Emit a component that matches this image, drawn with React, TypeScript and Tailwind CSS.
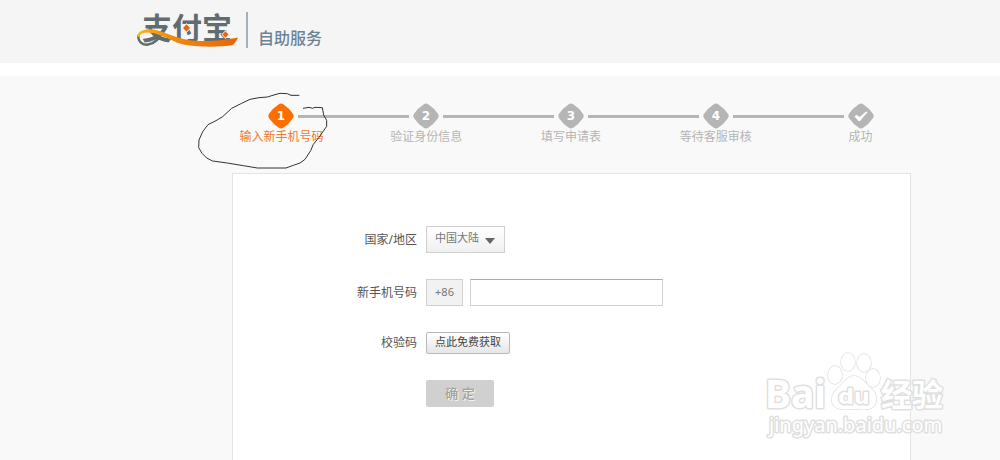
import React, { useState } from 'react';

type Step = {
  mark: string;
  label: string;
};

const STEPS: Step[] = [
  { mark: '1', label: '输入新手机号码' },
  { mark: '2', label: '验证身份信息' },
  { mark: '3', label: '填写申请表' },
  { mark: '4', label: '等待客服审核' },
  { mark: '', label: '成功' },
];

function Logo() {
  return (
    <svg viewBox="0 0 106 42" className="h-[42px] w-[106px] overflow-visible" role="img" aria-label="支付宝">
      <defs>
        <linearGradient id="swoosh" x1="0" x2="1" y1="0" y2="0">
          <stop offset="0" stopColor="#fbb216" />
          <stop offset="0.35" stopColor="#f08a0c" />
          <stop offset="1" stopColor="#e8650a" />
        </linearGradient>
      </defs>
      <text
        x="6"
        y="31"
        fontSize="30"
        fontWeight="700"
        fill="#5f6c70"
        fontFamily="'Noto Sans CJK SC', sans-serif"
      >
        支付宝
      </text>
      {/* 左侧回环 */}
      <path
        d="M2.500 27 C1.500 33 6 37.500 12 36.500 C19 35.500 24 30 27 22"
        fill="none"
        stroke="#5f6c70"
        strokeWidth="2.500"
      />
      <path
        d="M1.200 28.500 C2 22 12 20 20 22 C34 26 44 32 62 33 C78 33.500 91 31.500 102 29.500 C101 32 99 35 97 37 C86 39 66 39.500 50 37 C38 35 29 28 18 25.300 C10 23.500 4.500 24.500 3 29 Z"
        fill="url(#swoosh)"
      />
      {/* 底色先盖住字上的点，再画橙色菱形 */}
      <path d="M46 20 L50.500 15 L55 20 L50.500 25 Z" fill="#f5f5f5" />
      <path d="M47 20 L50.500 16.200 L54 20 L50.500 23.800 Z" fill="#e8650a" />
      <path d="M85.500 26.500 L89.500 22 L93.500 26.500 L89.500 31 Z" fill="#f5f5f5" />
      <path d="M86.500 26.500 L89.500 23.300 L92.500 26.500 L89.500 29.700 Z" fill="#e8650a" />
    </svg>
  );
}

function StepMark({ mark, active }: { mark: string; active: boolean }) {
  return (
    <svg viewBox="0 0 26 26" className="mx-1 size-[26px] shrink-0" aria-hidden="true">
      <path
        d="M10.500 1.500 Q13 -0.500 15.500 1.500 Q21 5 24.700 10.500 Q26.700 13 24.700 15.500 Q21 21 15.500 24.500 Q13 26.500 10.500 24.500 Q5 21 1.300 15.500 Q-0.700 13 1.300 10.500 Q5 5 10.500 1.500 Z"
        fill={active ? '#ff6c00' : '#b5b5b5'}
      />
      {mark ? (
        <text
          x="13"
          y="16.500"
          textAnchor="middle"
          fontSize="12"
          fontWeight="700"
          fill="#fff"
          fontFamily="'DejaVu Sans', sans-serif"
        >
          {mark}
        </text>
      ) : (
        <path d="M6.500 13.500 L8.500 11.800 L11.500 14 L18.500 8.300 L19.500 9.300 L12 18 L10.500 18 Z" fill="#fff" />
      )}
    </svg>
  );
}

function Steps() {
  return (
    <ol className="relative flex pl-[209px] pr-[67px] pt-[27px]">
      {STEPS.map((step, i) => (
        <li
          key={step.label}
          className={`flex flex-1 flex-col items-center text-xs leading-4 ${i === 0 ? 'text-[#f37a2c]' : 'text-[#b5b5b5]'}`}
        >
          <div className="flex w-full items-center">
            <span className={`h-[3px] flex-1 ${i === 0 ? '' : 'bg-[#b5b5b5]'}`} />
            <StepMark mark={step.mark} active={i === 0} />
            <span className={`h-[3px] flex-1 ${i === STEPS.length - 1 ? '' : 'bg-[#b5b5b5]'}`} />
          </div>
          <span>{step.label}</span>
        </li>
      ))}
      {/* 手绘圈注 */}
      <svg
        viewBox="0 0 840 285"
        className="pointer-events-none absolute left-[190px] top-[9px] h-[95px] w-[280px]"
        aria-hidden="true"
      >
        <path
          d="M328 31 L303 31 L292 26 L270 25 L255 29 L232 36 L207 38 L180 43 L155 55 L125 70 L98 95 L78 107 L54 119 L38 140 L27 165 L26 188 L36 205 L50 219 L68 228 L112 234 L160 242 L202 249 L288 249 L310 241 L330 234 L345 223 L362 197 L370 178 L387 157 L410 124 L410 106 L401 90 L397 68 L375 67 L368 70 L357 67 L339 70"
          fill="none"
          stroke="#333"
          strokeWidth="3"
        />
      </svg>
    </ol>
  );
}

function Watermark() {
  return (
    <svg
      viewBox="0 0 196 100"
      className="pointer-events-none absolute bottom-4 right-11 h-[100px] w-[196px]"
      aria-hidden="true"
    >
      <g fill="#fff" stroke="#e0e0e0" strokeWidth="1.500" strokeLinejoin="round" paintOrder="stroke">
        <text x="5" y="64" fontSize="39" fontWeight="700" strokeWidth="3" fontFamily="'Noto Sans', sans-serif">
          Bai
        </text>
        <text x="121" y="62" fontSize="31" fontWeight="700" strokeWidth="3" fontFamily="'Noto Sans CJK SC', sans-serif">
          经验
        </text>
        <ellipse cx="75" cy="31" rx="7" ry="9" />
        <ellipse cx="88" cy="18" rx="7" ry="9" />
        <ellipse cx="104" cy="19" rx="7" ry="9" />
        <ellipse cx="113" cy="34" rx="7" ry="9" />
        <path d="M94 32 C101 32 105 39 111 44 C117 50 118 57 114 62 C110 67 101 65 94 65 C87 65 79 67 74 62 C70 57 72 49 78 44 C84 39 87 32 94 32 Z" />
        <text
          x="94"
          y="60"
          textAnchor="middle"
          fontSize="22"
          fontWeight="700"
          strokeWidth="3"
          fontFamily="'DejaVu Sans', sans-serif"
        >
          du
        </text>
        <text x="9" y="88" fontSize="20" strokeWidth="3" fontFamily="'Noto Sans', sans-serif">
          jingyan.baidu.com
        </text>
      </g>
    </svg>
  );
}

export default function App() {
  const [region, setRegion] = useState('中国大陆');
  const [phone, setPhone] = useState('');

  const handleSubmit = (e: React.FormEvent) => {
    e.preventDefault();
  };

  return (
    <div className="relative flex min-h-screen flex-col bg-[#f9f9f9] font-['Noto_Sans','Noto_Sans_CJK_SC',sans-serif] text-xs text-[#555]">
      <header className="flex h-[76px] items-start border-b-[13px] border-white bg-[#f5f5f5] pl-[136px] pt-2">
        <Logo />
        <div className="ml-1 mt-1 flex h-9 items-end border-l-2 border-[#a3b1bd] pb-px pl-[10px]">
          <h1 className="font-['Noto_Sans_CJK_SC',sans-serif] text-base leading-5 font-medium text-[#6b8296]">自助服务</h1>
        </div>
      </header>

      <Steps />

      <main className="ml-[232px] mr-[89px] mt-[28px] flex-1 border border-b-0 border-[#e4e4e4] bg-white pb-[52px] pt-[52px]">
        <form onSubmit={handleSubmit} className="flex flex-col gap-[26px]">
          <div className="grid grid-cols-[184px_1fr] items-center gap-[9px]">
            <label htmlFor="region" className="text-right">
              国家/地区
            </label>
            <div className="relative w-fit">
              <select
                id="region"
                value={region}
                onChange={(e) => setRegion(e.target.value)}
                className="block h-[27px] w-[79px] appearance-none border border-[#d0d0d0] bg-linear-to-b from-white to-[#f0f0f0] pb-[2px] pl-2 text-[11px] text-[#777]"
              >
                <option>中国大陆</option>
                <option>中国香港</option>
                <option>中国澳门</option>
                <option>中国台湾</option>
              </select>
              <svg viewBox="0 0 10 6" className="pointer-events-none absolute right-[10px] top-3 h-[6px] w-[10px]" aria-hidden="true">
                <path d="M0 0 H10 L5 6 Z" fill="#666" />
              </svg>
            </div>
          </div>

          <div className="grid grid-cols-[184px_1fr] items-center gap-[9px]">
            <label htmlFor="phone" className="text-right">
              新手机号码
            </label>
            <div className="flex gap-[7px]">
              <span className="flex h-[27px] w-[37px] items-center justify-center border border-[#d0d0d0] bg-[#f2f2f2] text-[11px] text-[#777]">
                +86
              </span>
              <input
                id="phone"
                type="tel"
                value={phone}
                onChange={(e) => setPhone(e.target.value)}
                className="h-[27px] w-[193px] border border-[#d0d0d0] border-t-[#aaa] bg-white px-2 outline-none"
              />
            </div>
          </div>

          <div className="grid h-[22px] grid-cols-[184px_1fr] items-center gap-[9px]">
            <label htmlFor="get-code" className="text-right">
              校验码
            </label>
            <button
              id="get-code"
              type="button"
              className="flex h-[22px] w-[84px] items-center justify-center rounded-[2px] border border-[#b8b8b8] bg-linear-to-b from-white to-[#e6e6e6] pb-[2px] text-[11px] text-[#444]"
            >
              点此免费获取
            </button>
          </div>

          <button
            type="submit"
            className="ml-[193px] h-[27px] w-[68px] rounded-[2px] bg-[#d0d0d0] text-[13px] font-medium text-[#a5a293] [text-shadow:1px_1px_0_#f4f4f4]"
          >
            确 定
          </button>
        </form>
      </main>

      <Watermark />
    </div>
  );
}
